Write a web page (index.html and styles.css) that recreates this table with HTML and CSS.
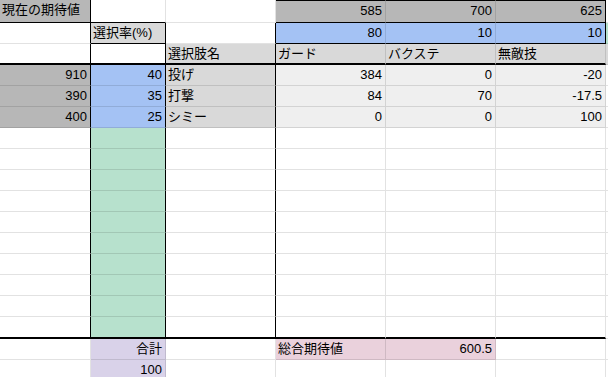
FILE: index.html
```html
<!DOCTYPE html>
<html lang="ja">
<head>
<meta charset="utf-8">
<title>期待値シート</title>
<link rel="stylesheet" href="styles.css">
</head>
<body>
<div class="sheet">
  <!-- row 1 -->
  <div class="c dk txt bR bB">現在の期待値</div>
  <div class="c bB"></div>
  <div class="c"></div>
  <div class="c dk num bT bB">585</div>
  <div class="c dk num bT bB">700</div>
  <div class="c dk num bT bB bR">625</div>
  <div class="c"></div>
  <!-- row 2 -->
  <div class="c bR"></div>
  <div class="c lt txt bR bB">選択率(%)</div>
  <div class="c bR"></div>
  <div class="c bl num bB">80</div>
  <div class="c bl num bB">10</div>
  <div class="c bl num bB bR">10</div>
  <div class="c gr"></div>
  <!-- row 3 -->
  <div class="c bR bB2"></div>
  <div class="c bR bB2"></div>
  <div class="c lt txt bR bB2">選択肢名</div>
  <div class="c lt txt bB2">ガード</div>
  <div class="c lt txt bB2">バクステ</div>
  <div class="c lt txt bB2">無敵技</div>
  <div class="c lt"></div>
  <!-- row 4 -->
  <div class="c dk num bR">910</div>
  <div class="c bl num bR">40</div>
  <div class="c lt txt bR">投げ</div>
  <div class="c xl num">384</div>
  <div class="c xl num">0</div>
  <div class="c xl num">-20</div>
  <div class="c"></div>
  <!-- row 5 -->
  <div class="c dk num bR">390</div>
  <div class="c bl num bR">35</div>
  <div class="c lt txt bR">打撃</div>
  <div class="c xl num">84</div>
  <div class="c xl num">70</div>
  <div class="c xl num">-17.5</div>
  <div class="c"></div>
  <!-- row 6 -->
  <div class="c dk num bR">400</div>
  <div class="c bl num bR">25</div>
  <div class="c lt txt bR">シミー</div>
  <div class="c xl num">0</div>
  <div class="c xl num">0</div>
  <div class="c xl num">100</div>
  <div class="c"></div>
  <!-- rows 7-15 -->
  <div class="c bR"></div><div class="c gn bR"></div><div class="c bR"></div><div class="c"></div><div class="c"></div><div class="c"></div><div class="c"></div>
  <div class="c bR"></div><div class="c gn bR"></div><div class="c bR"></div><div class="c"></div><div class="c"></div><div class="c"></div><div class="c"></div>
  <div class="c bR"></div><div class="c gn bR"></div><div class="c bR"></div><div class="c"></div><div class="c"></div><div class="c"></div><div class="c"></div>
  <div class="c bR"></div><div class="c gn bR"></div><div class="c bR"></div><div class="c"></div><div class="c"></div><div class="c"></div><div class="c"></div>
  <div class="c bR"></div><div class="c gn bR"></div><div class="c bR"></div><div class="c"></div><div class="c"></div><div class="c"></div><div class="c"></div>
  <div class="c bR"></div><div class="c gn bR"></div><div class="c bR"></div><div class="c"></div><div class="c"></div><div class="c"></div><div class="c"></div>
  <div class="c bR"></div><div class="c gn bR"></div><div class="c bR"></div><div class="c"></div><div class="c"></div><div class="c"></div><div class="c"></div>
  <div class="c bR"></div><div class="c gn bR"></div><div class="c bR"></div><div class="c"></div><div class="c"></div><div class="c"></div><div class="c"></div>
  <div class="c bR"></div><div class="c gn bR"></div><div class="c bR"></div><div class="c"></div><div class="c"></div><div class="c"></div><div class="c"></div>
  <!-- row 16 -->
  <div class="c bR bB2"></div><div class="c gn bR bB2"></div><div class="c bR bB2"></div><div class="c bB2"></div><div class="c bB2"></div><div class="c bB2"></div><div class="c"></div>
  <!-- row 17 -->
  <div class="c"></div>
  <div class="c pu num">合計</div>
  <div class="c"></div>
  <div class="c pk txt">総合期待値</div>
  <div class="c pk num">600.5</div>
  <div class="c"></div>
  <div class="c"></div>
  <!-- row 18 -->
  <div class="c"></div>
  <div class="c pu num">100</div>
  <div class="c"></div>
  <div class="c"></div>
  <div class="c"></div>
  <div class="c"></div>
  <div class="c"></div>
</div>
</body>
</html>
```

FILE: styles.css
```css
html, body {
  margin: 0;
  padding: 0;
  background: #ffffff;
  overflow: hidden;
}

.sheet {
  display: grid;
  grid-template-columns: 91px 75px 110px 110px 110px 110px minmax(0, 1fr);
  grid-template-rows: 23px repeat(14, 21px) 22px 21px 21px;
  width: 608px;
  font-family: "Liberation Sans", "Noto Sans CJK JP", sans-serif;
  font-size: 13px;
  color: #000000;
}

.c {
  box-sizing: border-box;
  min-width: 0;
  border-right: 1px solid rgba(0, 0, 0, 0.115);
  border-bottom: 1px solid rgba(0, 0, 0, 0.115);
  padding: 0 3px 0 2px;
  line-height: 20px;
  white-space: nowrap;
  overflow: hidden;
}

.num { text-align: right; }
.txt { text-align: left; }

/* fills */
.dk { background: #b7b7b7; }
.lt { background: #d9d9d9; }
.xl { background: #efefef; }
.bl { background: #a4c2f4; }
.gn { background: #b7e1cd; }
.gr { background: #b7e1cd; }
.pu { background: #d9d2e9; }
.pk { background: #ead1dc; }

/* black borders */
.bR { border-right-color: #000000; }
.bB { border-bottom-color: #000000; }
.bT { border-top: 1px solid #000000; }
.bB2 { border-bottom: 2px solid #000000; }
```
